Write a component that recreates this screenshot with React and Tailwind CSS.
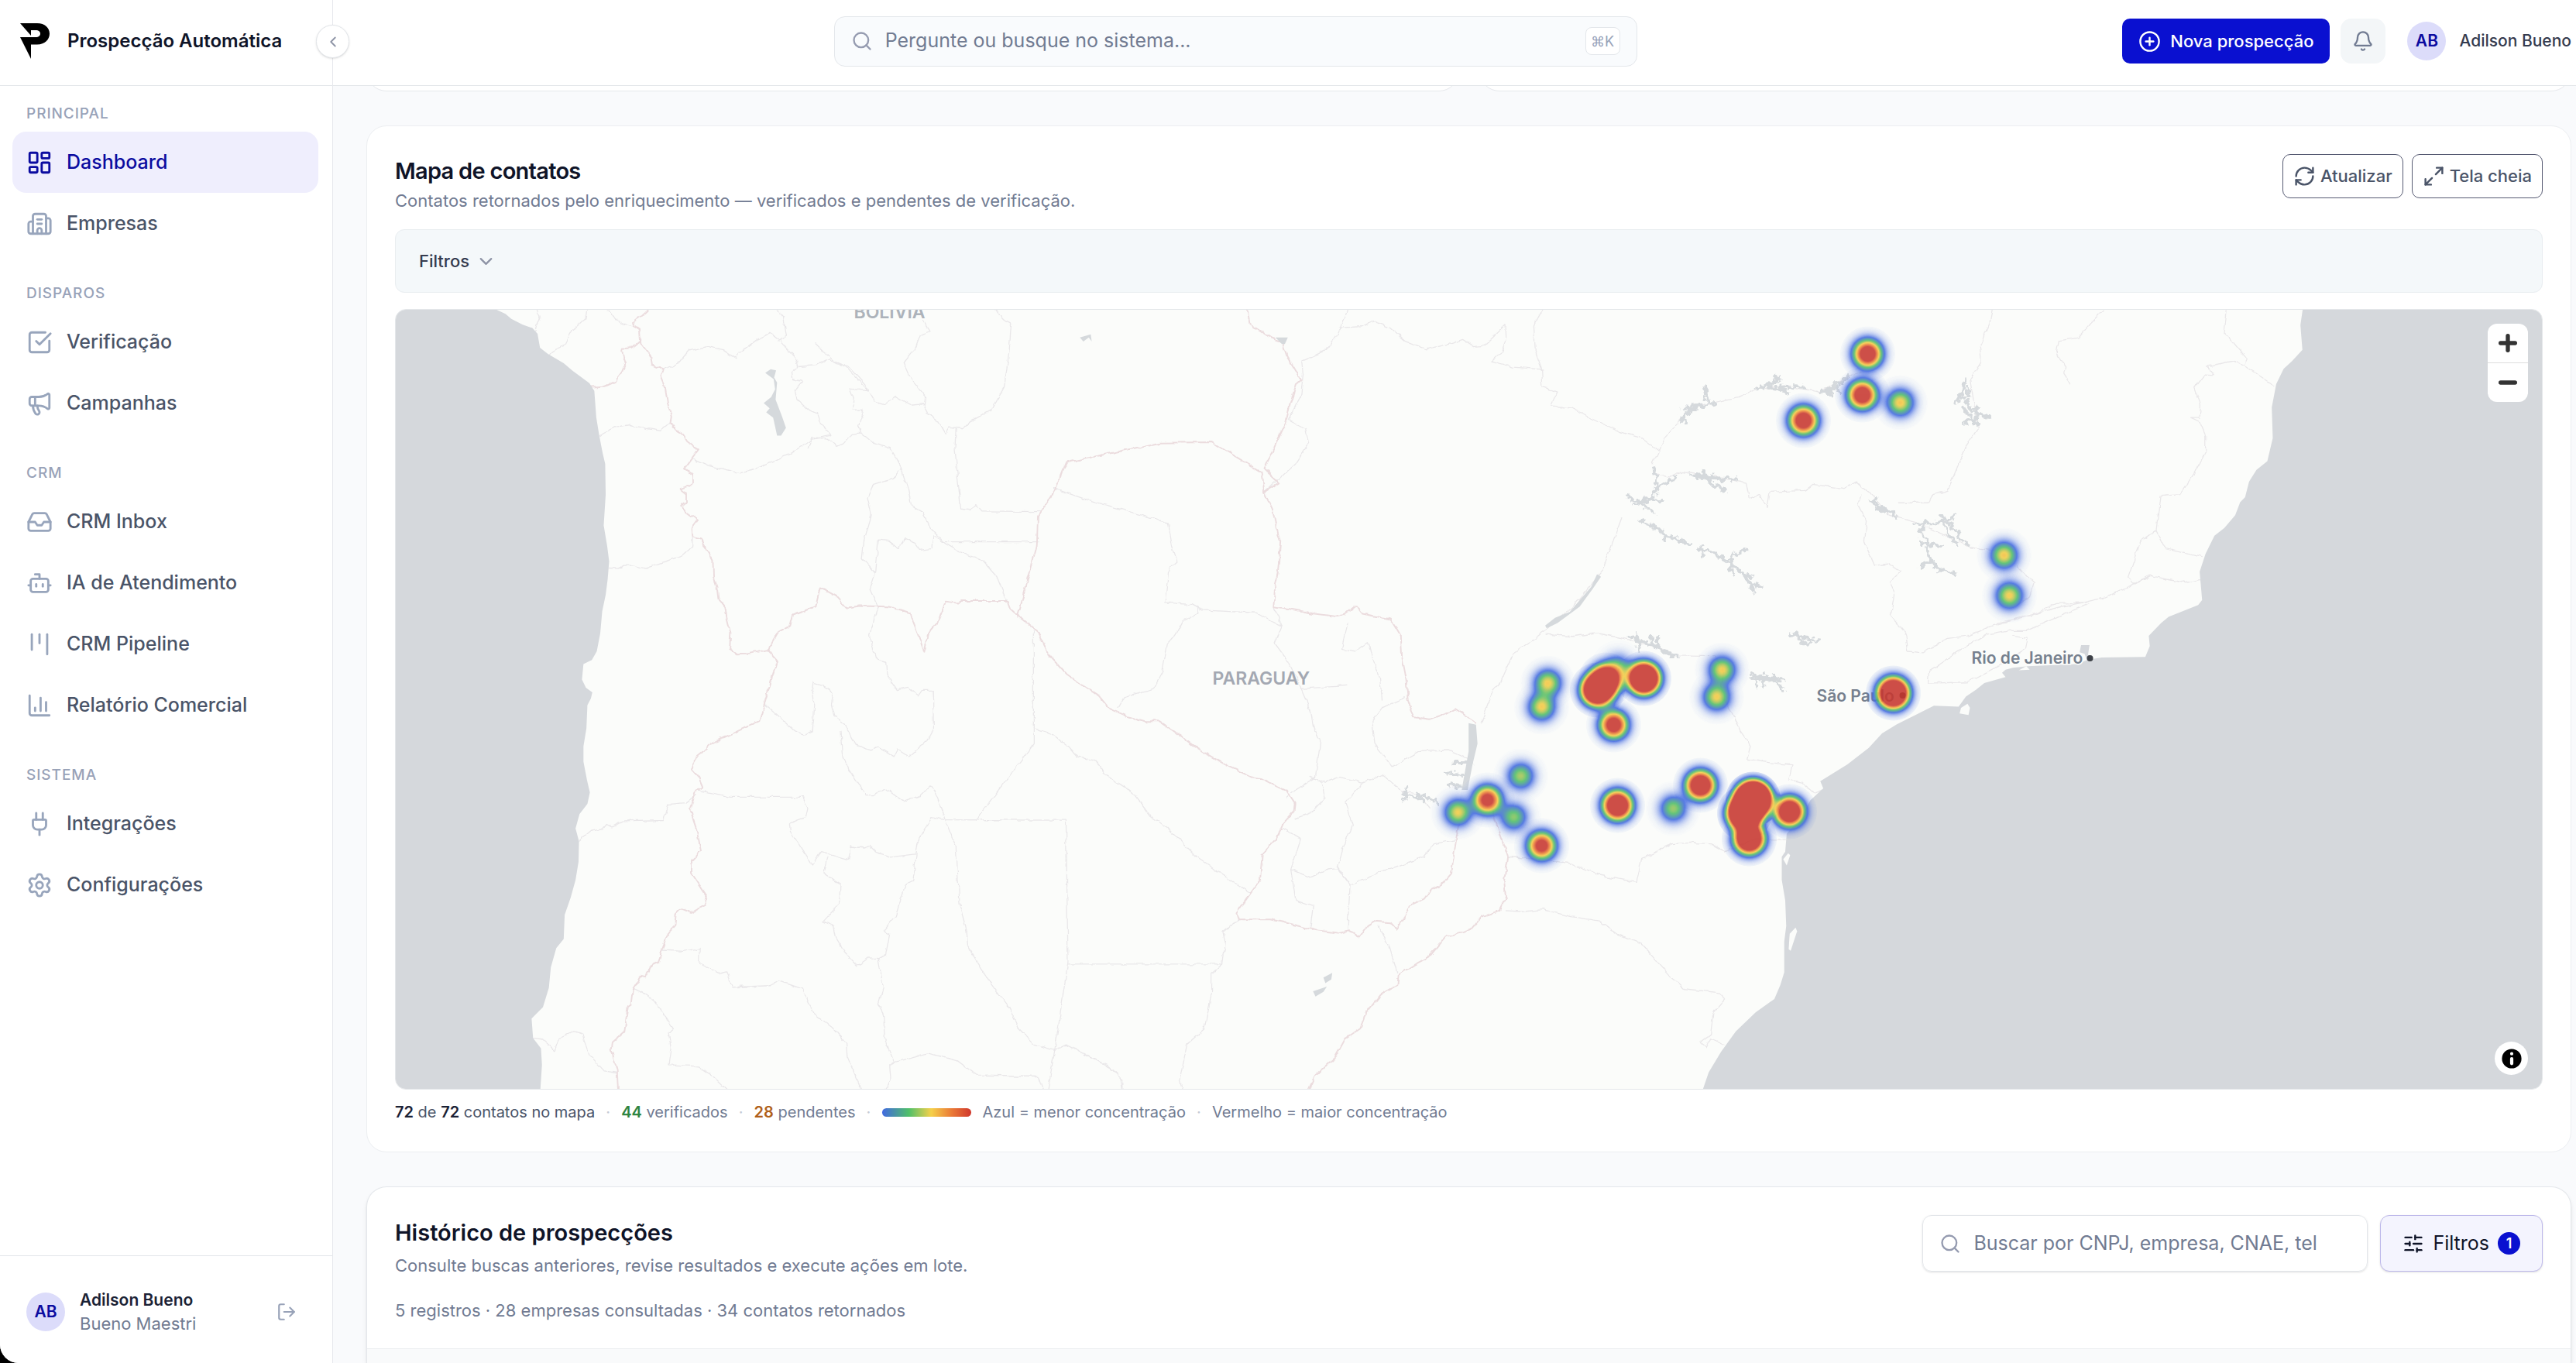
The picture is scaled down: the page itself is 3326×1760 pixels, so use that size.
import React, { useState } from 'react';
import {
  Bell,
  Bot,
  Building2,
  ChartColumn,
  ChevronDown,
  ChevronLeft,
  CirclePlus,
  Inbox,
  Kanban,
  LayoutDashboard,
  LogOut,
  Maximize2,
  Megaphone,
  Minus,
  Plug,
  Plus,
  RefreshCw,
  Search,
  Settings,
  SlidersHorizontal,
  SquareCheckBig,
} from 'lucide-react';

const NAV = [
  {
    title: 'Principal',
    items: [
      { label: 'Dashboard', icon: LayoutDashboard, active: true },
      { label: 'Empresas', icon: Building2 },
    ],
  },
  {
    title: 'Disparos',
    items: [
      { label: 'Verificação', icon: SquareCheckBig },
      { label: 'Campanhas', icon: Megaphone },
    ],
  },
  {
    title: 'CRM',
    items: [
      { label: 'CRM Inbox', icon: Inbox },
      { label: 'IA de Atendimento', icon: Bot },
      { label: 'CRM Pipeline', icon: Kanban },
      { label: 'Relatório Comercial', icon: ChartColumn },
    ],
  },
  {
    title: 'Sistema',
    items: [
      { label: 'Integrações', icon: Plug },
      { label: 'Configurações', icon: Settings },
    ],
  },
];

// x, y, weight
const CONTACTS = [
  [2412, 457, 1.45],
  [2405, 510, 1.45],
  [2454, 520, 0.63],
  [2329, 543, 1.45],
  [2588, 717, 0.63],
  [2595, 769, 0.61],
  [2445, 895, 3],
  [2311, 1048, 2],
  [1999, 882, 0.61],
  [1991, 913, 0.61],
  [2063, 891, 3.2],
  [2074, 878, 2.3],
  [2090, 862, 0.35],
  [2123, 876, 3.4],
  [2084, 936, 1.35],
  [2224, 865, 0.61],
  [2217, 900, 0.61],
  [1964, 1002, 0.5],
  [1921, 1033, 1.22],
  [1883, 1049, 0.6],
  [1955, 1055, 0.46],
  [1991, 1092, 1.22],
  [2089, 1040, 2],
  [2161, 1044, 0.48],
  [2196, 1014, 1.85],
  [2264, 1032, 8],
  [2253, 1050, 5],
  [2259, 1083, 2.5],
];

const KERNEL = 240;
const DENSITY = 1.2;
const RAMP = [
  [0, 65, 105, 225, 0],
  [0.2, 65, 105, 225, 1],
  [0.4, 80, 190, 105, 1],
  [0.6, 245, 205, 70, 1],
  [0.8, 235, 125, 55, 1],
  [1, 200, 55, 48, 1],
];

function rampAt(d) {
  if (d >= 1) return RAMP[RAMP.length - 1].slice(1);
  const i = RAMP.findIndex((stop) => stop[0] > d) - 1;
  const a = RAMP[i];
  const b = RAMP[i + 1];
  const t = (d - a[0]) / (b[0] - a[0]);
  return [1, 2, 3, 4].map((c) => a[c] + (b[c] - a[c]) * t);
}

// Alpha is stored as 1 - exp(-density), so stacked points add up.
const TABLE = Array.from({ length: 101 }, (_, i) => rampAt(-Math.log(1 - Math.min(i / 100, 0.99)) / DENSITY));
const channel = (c, max) => TABLE.map((v) => (v[c] / max).toFixed(3)).join(' ');

const WEIGHTS = [...new Set(CONTACTS.map((p) => p[2]))];

function Heatmap() {
  return (
    <g>
      <defs>
        {WEIGHTS.map((w) => (
          <radialGradient key={w} id={`heat-${Math.round(w * 100)}`}>
            {Array.from({ length: 37 }, (_, i) => {
              const d = w * Math.exp(-(i * i) / KERNEL);
              return <stop key={i} offset={i / 36} stopColor="#fff" stopOpacity={i === 36 ? 0 : 1 - Math.exp(-d * DENSITY)} />;
            })}
          </radialGradient>
        ))}
        <filter id="heat-ramp" filterUnits="userSpaceOnUse" x="1800" y="400" width="900" height="800" colorInterpolationFilters="sRGB">
          <feColorMatrix values="0 0 0 1 0  0 0 0 1 0  0 0 0 1 0  0 0 0 1 0" />
          <feComponentTransfer>
            <feFuncR type="table" tableValues={channel(0, 255)} />
            <feFuncG type="table" tableValues={channel(1, 255)} />
            <feFuncB type="table" tableValues={channel(2, 255)} />
            <feFuncA type="table" tableValues={channel(3, 1)} />
          </feComponentTransfer>
        </filter>
      </defs>
      <g filter="url(#heat-ramp)" opacity="0.88">
        {CONTACTS.map(([x, y, w]) => (
          <circle key={`${x}-${y}`} cx={x} cy={y} r="36" fill={`url(#heat-${Math.round(w * 100)})`} />
        ))}
      </g>
    </g>
  );
}

const OCEANS = [
  // Pacific
  'M0 20L222 30L240 38L252 48L275 59L295 66L305 77L310 104L326 116L358 134L376 149L410 173L420 188L424 240L430 275L437 310L442 330L443 390L439 450L446 490L450 520L447 555L443 585L436 617L432 660L425 695L415 712L398 720L395 750L403 766L416 775L413 787L406 800L404 845L398 880L398 910L405 945L411 970L406 992L390 1012L382 1040L389 1065L388 1105L382 1140L372 1175L360 1208L358 1255L343 1273L332 1310L328 1350L316 1388L293 1410L296 1448L312 1468L314 1500L310 1560L0 1560Z',
  // Atlantic
  'M3880 20L3874 60L3878 108L3857 130L3840 145L3825 175L3816 220L3818 280L3807 325L3785 342L3770 365L3762 395L3752 405L3742 430L3720 455L3700 470L3682 505L3670 540L3675 595L3667 605L3607 628L3592 640L3567 665L3569 685L3560 706L3472 707L3452 710L3444 702L3447 683L3430 683L3427 697L3437 700L3442 712L3422 720L3367 722L3322 724L3292 727L3277 731L3270 737L3277 745L3252 752L3234 757L3217 770L3197 783L3182 803L3162 802L3132 801L3097 818L3057 837L3027 855L3000 883L2957 915L2902 948L2908 962L2882 985L2862 1020L2834 1050L2831 1085L2824 1095L2824 1140L2831 1180L2833 1230L2829 1260L2829 1320L2821 1345L2809 1372L2771 1398L2731 1435L2701 1475L2676 1515L2660 1560L4400 1560L4400 20Z',
];

const ISLANDS = [
  'M2827 1100L2837 1088L2841 1092L2834 1112Z',
  'M2840 1245L2852 1233L2855 1240L2842 1278L2838 1275Z',
  'M3187 805L3200 797L3205 805L3202 819L3184 816Z',
  'M3304 732L3319 724L3326 731Z',
];

const COUNTRY_BORDERS = [
  'M531 28L515 42L498 55L500 62L512 70L514 95L534 120L537 137L560 147L555 160L563 178L568 210L576 240L574 250L585 264L600 273L608 285L631 302L615 322L603 338L620 352L620 368L615 374L593 380L606 390L606 403L597 413L604 423L628 440L618 455L619 472L637 480L660 518L661 550L668 570L671 593L685 608L688 630L696 660L694 690L708 700L735 699L771 692L790 712L754 831L655 875L637 893L625 902L617 925L631 940L640 960L625 966L614 1000L620 1022L627 1042L636 1083L617 1102L617 1127L648 1172L643 1188L614 1203L596 1196L585 1207L583 1230L570 1243L557 1275L550 1300L537 1306L523 1330L514 1328L498 1352L494 1382L488 1386L481 1436L457 1456L455 1470L466 1512L468 1550',
  'M413 180L442 179L463 170L478 150L484 136L476 112L478 106L495 104L514 88',
  'M771 692L790 660L815 647L821 625L868 608L877 572L895 580L910 588L931 610L960 607L1015 608L1060 620L1066 640L1075 662L1088 696L1097 660L1118 635L1131 598L1155 601L1162 597L1256 597L1262 612L1280 628L1317 657L1340 700L1375 738L1400 755L1440 780L1462 806L1500 822L1535 831L1564 831L1600 855L1641 885L1700 917L1755 942L1775 945L1822 967L1838 990L1836 1007L1815 1030L1800 1062L1772 1090L1768 1140L1742 1175L1720 1205L1724 1217L1790 1217L1838 1228L1880 1238L1926 1243L1948 1238L1970 1252L1985 1230L2000 1221L2032 1223L2044 1236L2060 1214L2070 1190L2100 1177L2113 1160L2135 1150L2155 1128L2162 1080L2170 1030',
  'M1277 628L1316 490L1318 432L1352 382L1374 328L1565 289L1670 288L1772 347L1776 385L1793 420L1801 455L1809 480L1804 540L1798 570L1795 608L1830 613L1880 622L1920 627L1940 622L1962 606L1975 622L2033 633L2053 665L2055 705L2063 745L2067 790L2080 825L2110 829L2142 818L2163 807L2204 833',
  'M1742 28L1747 58L1788 84L1812 92L1822 120L1838 145L1851 167L1842 175L1828 215L1820 250L1776 340L1806 367L1776 385',
  'M2238 1010L2252 1045L2270 1095L2262 1140L2265 1175L2252 1200L2215 1212L2195 1236L2145 1250L2110 1290L2080 1305L2048 1325L2046 1345L2012 1364L1982 1400L1970 1430L1940 1450L1920 1485L1880 1520L1866 1550',
];

const STATE_BORDERS = [
  'M305 30L310 45L300 70L285 78L295 66',
  'M405 30L402 48L372 75L360 98L340 106L329 118',
  'M448 30L460 46L478 57L500 62',
  'M430 274L465 258L490 254L530 262L555 266L574 250',
  'M450 533L468 534L480 528L500 528L523 534L597 509L618 490L619 472',
  'M560 147L590 136L612 110L650 102L680 108L708 126L712 115L750 88L775 76L790 85L830 128L833 141L820 152L822 165L842 170L826 188L830 203L855 225L872 232L880 255L899 275L862 282L820 308L760 335L715 348L650 333L618 319',
  'M790 30L803 45L809 80L793 92',
  'M833 141L870 138L895 126L912 135L935 140L968 175L988 208L1008 214L1030 200L1060 216L1085 214L1095 232L1112 243L1130 273L1140 258L1165 262L1178 250',
  'M868 96L905 130L930 140L975 188L937 184L945 203L942 225L965 225L955 255L960 270L985 290L1020 300L1040 335L1055 380L1062 412L1085 425L1100 455L1130 485L1160 502L1205 518L1235 550L1255 598',
  'M853 298L862 278L893 282L910 296L925 290L940 272L960 270',
  'M1085 50L1100 72L1080 80L1070 105L1047 133L1062 165L1090 198L1088 216',
  'M1233 30L1245 48L1264 57L1260 110L1250 180L1225 225L1178 250',
  'M1152 262L1150 300L1162 418L1180 420L1194 411L1203 422L1322 423',
  'M1042 338L1025 358L985 370L973 395L981 430L966 480L962 515L988 542',
  'M1318 482L1125 482L1106 470L1103 495L1080 498L1070 485L1048 476L1037 494L1015 480L995 478L990 540L978 575L994 608L983 645L977 665L990 710L1010 715L1012 740L1033 770L1055 765L1077 782L1085 771L1105 771L1107 848L1098 865L1057 900L1033 885L1025 900L995 882L980 888L950 878L925 835L905 820L900 800L904 775L882 762L863 757L860 775L866 800L862 850L845 857L825 850L800 828L764 798',
  'M918 852L922 895L935 925L970 975L985 975L1010 962L1045 987L1080 975L1100 957L1115 980L1130 1023L1375 1024L1379 1300L1352 1472L1338 1550',
  'M1309 655L1309 875L1192 1024',
  'M1309 845L1345 855L1380 880L1398 900L1438 910L1450 932L1510 970L1545 1015L1575 1035L1640 1095L1700 1135L1748 1165',
  'M630 965L695 979L842 979L852 1000L848 1018L815 1030L817 1045L860 1110L880 1085L935 1100L940 1075L965 1078L978 1074L990 1086L1020 1096L1070 1090L1073 1070L1103 1017L1130 1023L1152 1075L1160 1190L1174 1240L1176 1270L1225 1345L1260 1390L1280 1430L1310 1460L1352 1472L1375 1461L1410 1478L1470 1510L1490 1530L1490 1550',
  'M893 1095L885 1128L918 1148L916 1185L882 1221L905 1230L910 1255L925 1280L952 1308L975 1292L995 1293L1010 1285L1018 1245L1006 1240L1030 1210L1050 1150L1065 1143L1072 1090',
  'M995 1293L1005 1350L995 1382L1005 1400L1008 1450L1027 1495L1098 1478L1155 1492L1194 1520L1318 1522L1328 1550',
  'M1027 1495L1018 1500L1020 1530L1006 1550',
  'M390 1063L415 1043L438 1040L445 1032L455 1037L480 1025L560 1023L570 993L605 990L625 975',
  'M557 1277L600 1279L633 1273L632 1303L675 1322L687 1319L700 1349L775 1346L795 1337L840 1352L865 1400L905 1430L930 1460L932 1485L960 1550',
  'M498 1352L520 1360L540 1375L580 1430L570 1437L575 1467L570 1500L630 1503L660 1522L690 1550',
  'M296 1448L315 1450L340 1472L348 1450L380 1435L395 1440L410 1480L440 1512L466 1516',
  'M1350 378L1411 398L1582 445L1590 490L1600 520L1583 535L1575 600L1630 604L1650 615L1760 620L1812 645',
  'M1642 608L1642 620L1612 635L1600 658L1580 680L1570 735L1550 770L1493 785L1481 805',
  'M1379 1304L1692 1304L1670 1322L1670 1360L1655 1430L1620 1460L1605 1530L1610 1550',
  'M1692 1304L1698 1260L1694 1240L1724 1217',
  'M1411 1480L1460 1502L1485 1525L1490 1550',
  'M1945 28L1932 65L1900 110L1852 130L1855 155L1850 200L1825 245L1860 262L1866 290L1840 330L1776 385',
  'M1930 65L1975 63L1998 52L2030 65L2060 90L2105 107L2150 97L2178 88L2200 102L2222 100L2265 60L2266 85L2255 115L2235 130L2280 142L2340 146',
  'M2340 30L2322 60L2325 110L2338 145L2340 180L2370 190L2357 217L2400 222L2440 242L2495 268L2540 280L2575 305L2563 330',
  'M2575 305L2590 275L2640 220L2690 210L2735 200L2780 182L2840 180L2900 190L2960 160L2990 150',
  'M2563 350L2600 356L2622 346L2700 357L2752 368L2758 398L2778 390L2795 415L2800 385L2870 382L2885 370L2950 378L2975 365L3000 385L3040 430L3100 445L3200 490L3255 500',
  'M2500 435L2475 500L2460 540L2400 610L2345 655L2280 700L2255 755L2240 770L2215 835',
  'M2345 662L2400 666L2450 660L2520 673L2580 690L2610 704L2690 705L2705 730L2700 780L2725 815L2740 850L2762 880L2755 905L2800 912L2845 916L2838 945L2865 950L2890 972L2905 965',
  'M1795 610L1812 645L1798 680L1825 715L1850 765L1870 810L1875 840L1890 870L1880 940L1840 965L1822 980',
  'M1850 768L1945 762M1945 640L1935 690L1960 695L1985 678L2000 720L2010 745L2015 790M2060 785L2015 805L1995 830L2000 875L2035 920L2090 890L2150 888L2190 905',
  'M1870 940L1900 950L1930 940L1975 950L2015 935L2060 970L2090 975L2110 1000',
  'M1890 945L1900 980L1870 1010L1840 1020M1975 952L1940 990L1955 1035L1935 1080L1925 1115L1950 1150L1945 1235M1815 1040L1850 1060L1830 1120L1840 1180L1875 1192L1870 1232M1830 1120L1870 1135L1905 1120L1925 1118L1950 1150L2010 1125L2100 1095L2120 1070L2165 1062M2008 1230L2030 1270L2045 1320',
  'M2270 1095L2330 1100L2400 1110L2450 1130L2530 1145L2540 1100L2600 1070L2640 1068L2680 1070L2710 1085L2770 1060L2834 1062',
  'M2265 1200L2300 1202L2340 1198L2400 1212L2455 1220L2490 1245L2540 1265L2600 1330L2625 1352L2700 1360L2708 1375L2685 1400L2680 1440L2660 1455L2672 1465L2680 1450L2708 1462',
  'M3250 30L3245 55L3225 100L3228 130L3205 165L3222 262L3195 300L3160 382L3130 390L3122 406L3062 406',
  'M3474 32L3450 55L3425 85L3385 90L3380 115L3398 140L3395 155L3408 175',
  'M3725 30L3720 75L3735 90L3765 125L3760 138L3822 178',
  'M3760 138L3738 130L3685 140L3700 158L3680 157L3660 182L3672 215L3670 240L3652 240L3670 248L3682 275L3682 308L3658 350L3630 390L3590 393L3582 460L3550 482L3525 552L3535 563L3570 548',
  'M3582 460L3600 495L3675 512M3675 555L3640 562L3570 548L3480 590L3435 600L3390 608L3250 645L3200 665L3160 670L3110 698L3080 695L3075 660L3045 625L3052 580L3042 560L3065 540L3040 525L3012 528L2990 480L2995 440L2978 410L2985 390',
  'M3444 603L3390 625L3320 655L3280 655L3240 662L3190 690L3122 735L3120 757L3200 755L3260 725L3318 690L3322 670L3290 665',
  'M3440 600L3380 602L3330 625L3260 640M3300 530L3335 560L3325 590L3300 605',
];

const LAKES = [
  'M766 153L777 146L788 148L784 162L790 172L787 205L800 238L808 260L798 275L790 275L782 240L768 230L775 222L763 212L778 200L786 185L783 165Z',
  'M1403 84L1425 78L1427 92L1421 84L1410 92Z',
  'M1799 84L1824 84L1818 97L1812 97Z',
  'M1875 1357L1903 1348L1896 1358L1880 1367ZM1896 1330L1914 1321L1912 1334L1900 1341Z',
  'M2190 835L2205 838L2208 875L2198 915L2188 965L2176 965L2190 890Z',
  'M2345 645L2365 630L2395 618L2420 590L2438 570L2450 545L2458 550L2440 575L2415 608L2370 640L2348 650Z',
];

const RESERVOIRS = [
  'M2538 440L2570 455L2590 470L2610 475L2640 487M2572 452L2588 468L2586 478',
  'M2655 495L2690 505L2720 525L2740 540L2765 565L2785 570M2662 490L2665 512M2715 520L2732 503L2755 498M2720 525L2723 545M2740 540L2768 578M2752 548L2765 550',
  'M2525 410L2555 400L2570 385L2572 365L2565 335M2510 393L2535 405L2568 425M2550 400L2582 403M2570 378L2610 357',
  'M2618 250L2630 232L2650 220L2690 212M2668 180L2675 212M2625 222L2645 225M2620 238L2632 250M2640 218L2675 216',
  'M2775 185L2800 175L2820 160M2795 178L2835 190M2818 180L2870 182M2805 155L2820 168',
  'M2640 352L2672 352L2700 358L2735 360M2665 345L2680 370L2712 380M2650 356L2700 360',
  'M2900 195L2920 185L2945 170L2958 160M2905 185L2925 195M2930 172L2940 190M2915 190L2950 168',
  'M2518 668L2545 678L2570 685L2585 695L2615 704M2530 662L2535 692M2560 668L2562 682L2600 705M2572 665L2575 690M2530 674L2575 688',
  'M2762 738L2790 748L2830 750M2770 745L2775 765M2790 742L2785 765M2808 740L2812 755L2825 770M2765 748L2800 752',
  'M2842 660L2870 670L2902 673M2852 658L2862 678L2885 680',
  'M3195 168L3190 190L3175 212M3200 180L3205 200L3190 200M3198 208L3208 228L3245 240M3190 220L3215 250M3190 250L3215 245M3210 225L3220 218L3218 255',
  'M3002 402L3025 415L3058 435M3012 400L3020 420L3050 425M3092 445L3165 445L3190 480L3205 490M3148 430L3160 465L3180 490M3160 440L3175 432M3100 460L3120 480L3118 500L3128 520L3105 530M3105 485L3148 490M3120 510L3140 535L3175 543M3112 450L3104 468',
  'M2142 932L2185 935M2150 955L2180 958M2160 912L2195 912M2055 970L2080 980L2100 975L2125 990M2065 962L2062 985M2085 975L2100 988',
];

function ContactMap() {
  return (
    <svg
      viewBox="511 400 2772 1006"
      preserveAspectRatio="xMidYMid slice"
      className="block h-full w-full font-['Inter',sans-serif] font-semibold"
      role="img"
      aria-label="Mapa de calor dos contatos"
    >
      <defs>
        <filter id="jagged-lines" filterUnits="userSpaceOnUse" x="0" y="0" width="4400" height="1600" colorInterpolationFilters="sRGB">
          <feTurbulence type="fractalNoise" baseFrequency="0.06" numOctaves="2" seed="4" />
          <feDisplacementMap in="SourceGraphic" scale="9" xChannelSelector="R" yChannelSelector="G" />
        </filter>
        <filter id="jagged-water" filterUnits="userSpaceOnUse" x="0" y="0" width="4400" height="1600" colorInterpolationFilters="sRGB">
          <feTurbulence type="fractalNoise" baseFrequency="0.1" numOctaves="2" seed="8" />
          <feDisplacementMap in="SourceGraphic" scale="18" xChannelSelector="R" yChannelSelector="G" />
        </filter>
      </defs>
      <rect x="511" y="400" width="2772" height="1006" fill="#fbfcfa" />
      <g transform="translate(500 380) scale(0.63776 0.66327)" fill="none" strokeLinejoin="round" strokeLinecap="round">
        <g filter="url(#jagged-lines)">
          {STATE_BORDERS.map((d) => (
            <path key={d} d={d} stroke="#e9e7e9" strokeWidth="2" />
          ))}
          {COUNTRY_BORDERS.map((d) => (
            <path key={d} d={d} stroke="#ebdcde" strokeWidth="3" />
          ))}
        </g>
        {LAKES.map((d) => (
          <path key={d} d={d} fill="#d5d9dc" />
        ))}
        <g filter="url(#jagged-water)">
          {RESERVOIRS.map((d) => (
            <path key={d} d={d} stroke="#d5d9dc" strokeWidth="6" />
          ))}
        </g>
        {OCEANS.map((d) => (
          <path key={d} d={d} fill="#d5d8dc" />
        ))}
        {ISLANDS.map((d) => (
          <path key={d} d={d} fill="#fbfcfa" />
        ))}
      </g>
      <g fontSize="23">
        <text x="1103" y="411" fill="#adb3ba">BOLIVIA</text>
        <text x="1566" y="884" fill="#a3a8b2">PARAGUAY</text>
      </g>
      <g fontSize="21">
        <g fill="#76808e" stroke="#fbfcfa" strokeWidth="3" paintOrder="stroke">
          <text x="2546" y="857">Rio de Janeiro</text>
          <text x="2346" y="906">São Paulo</text>
        </g>
        <circle cx="2699" cy="850" r="4" fill="#3d4147" />
        <circle cx="2457" cy="898" r="4" fill="#3d4147" />
      </g>
      <Heatmap />
    </svg>
  );
}

function Logo() {
  return (
    <svg viewBox="0 0 38 46" className="h-[46px] w-[38px] shrink-0" aria-hidden="true">
      <path
        fill="#000"
        fillRule="evenodd"
        d="M0 0H22C32 0 38 6 38 13.500C38 21 32 27.500 22 27.500H14V46L0 18H20C24 18 26 16 26 13.500C26 11 24 9 20 9H14V16Z"
      />
    </svg>
  );
}

function Avatar() {
  return (
    <span className="flex size-[50px] shrink-0 items-center justify-center rounded-full bg-[#dcdcfa] text-[21px] font-semibold text-[#0b0ba0]">
      AB
    </span>
  );
}

function Sidebar() {
  return (
    <aside className="flex w-[430px] shrink-0 flex-col border-r border-[#e6e8ec] bg-white">
      <div className="relative flex h-[111px] shrink-0 items-center gap-[23px] border-b border-[#e2e5e9] pb-1 pl-[26px]">
        <Logo />
        <span className="text-[24px] font-semibold text-[#0f1428]">Prospecção Automática</span>
        <button
          type="button"
          aria-label="Recolher menu"
          className="absolute top-8 -right-[22px] z-10 flex size-[43px] items-center justify-center rounded-full border border-[#e2e5e9] bg-white text-[#8d93a5] shadow-sm"
        >
          <ChevronLeft size={22} />
        </button>
      </div>
      <nav className="flex flex-1 flex-col gap-9 pt-[21px] pr-[18px] pl-4">
        {NAV.map((group) => (
          <div key={group.title}>
            <h2 className="mb-2 pl-[18px] text-[19px] leading-[30px] font-medium tracking-wider text-[#98a2b8] uppercase">
              {group.title}
            </h2>
            <ul>
              {group.items.map(({ label, icon: Icon, active }) => (
                <li key={label}>
                  <a
                    href="#"
                    aria-current={active ? 'page' : undefined}
                    className={
                      active
                        ? 'flex h-[79px] items-center gap-[18px] rounded-[18px] bg-[#efeefd] pl-[18px] text-[25px] font-medium text-[#0b0ba0]'
                        : 'flex h-[79px] items-center gap-[18px] rounded-[18px] pl-[18px] text-[25px] font-medium text-[#4a5468]'
                    }
                  >
                    <Icon size={34} className={active ? 'text-[#0b0ba0]' : 'text-[#98a5bc]'} />
                    {label}
                  </a>
                </li>
              ))}
            </ul>
          </div>
        ))}
      </nav>
      <div className="flex items-center gap-[19px] border-t border-[#e2e5e9] pt-[42px] pr-[46px] pb-9 pl-[34px]">
        <Avatar />
        <div className="flex-1 leading-[30px]">
          <p className="text-[21px] font-semibold text-[#1b2235]">Adilson Bueno</p>
          <p className="text-[22px] text-[#717b92]">Bueno Maestri</p>
        </div>
        <button type="button" aria-label="Sair" className="text-[#98a2b8]">
          <LogOut size={26} />
        </button>
      </div>
    </aside>
  );
}

function Topbar() {
  return (
    <header className="flex h-[111px] shrink-0 items-center border-b border-[#e2e5e9] bg-white pr-[6px] pb-1 pl-5">
      <div className="flex-1" />
      <div className="flex h-[65px] shrink basis-[1037px] items-center gap-4 rounded-[14px] border border-[#e4e7eb] bg-[#f9fbfd] px-[21px]">
        <Search size={28} className="text-[#959bb0]" />
        <input
          type="text"
          aria-label="Busca no sistema"
          placeholder="Pergunte ou busque no sistema..."
          className="min-w-0 flex-1 bg-transparent text-[25px] outline-none placeholder:text-[#717b92]"
        />
        <kbd className="flex h-9 w-[45px] items-center justify-center rounded-lg border border-[#e4e7eb] bg-white font-['Inter','DejaVu_Sans',sans-serif] text-[18px] text-[#98a2b8]">
          ⌘K
        </kbd>
      </div>
      <div className="flex-1" />
      <button type="button" className="flex h-[58px] items-center gap-3 rounded-[10px] bg-[#0a10d0] px-[21px] text-[22px] font-medium text-white">
        <CirclePlus size={29} />
        Nova prospecção
      </button>
      <button type="button" aria-label="Notificações" className="ml-[14px] flex size-[58px] items-center justify-center rounded-[14px] bg-[#f3f6f8] text-[#717b92]">
        <Bell size={28} />
      </button>
      <div className="ml-7 flex items-center gap-[17px] text-[21px] font-medium text-[#353b4e]">
        <Avatar />
        Adilson Bueno
      </div>
    </header>
  );
}

function Dot() {
  return <span className="w-[34px] text-center text-[#c5cad4]">·</span>;
}

function MapCard({ onToggleFilters, filtersOpen }) {
  return (
    <section className="rounded-[26px] border border-[#eceef1] bg-white p-9">
      <div className="flex items-start justify-between">
        <div>
          <h2 className="pt-0.5 text-[29px] leading-10 font-semibold tracking-tight text-[#0f1428]">Mapa de contatos</h2>
          <p className="text-[22px] leading-9 text-[#717b92]">
            Contatos retornados pelo enriquecimento — verificados e pendentes de verificação.
          </p>
        </div>
        <div className="flex gap-[11px] text-[22px] font-medium text-[#4a5468]">
          <button type="button" className="flex h-[57px] items-center gap-[6px] rounded-[10px] border border-[#565a72] px-[13px]">
            <RefreshCw size={29} />
            Atualizar
          </button>
          <button type="button" className="flex h-[57px] items-center gap-[6px] rounded-[10px] border border-[#565a72] px-[13px]">
            <Maximize2 size={29} />
            Tela cheia
          </button>
        </div>
      </div>
      <div className="mt-[19px] flex h-[82px] items-center rounded-xl border border-[#e9edf0] bg-[#f4f8fa] pl-[30px]">
        <button
          type="button"
          aria-expanded={filtersOpen}
          onClick={onToggleFilters}
          className="flex items-center gap-2 text-[22px] font-medium text-[#353b4e]"
        >
          Filtros
          <ChevronDown size={27} className="text-[#8d93a5]" />
        </button>
      </div>
      <div className="relative mt-[21px] h-[1008px] overflow-hidden rounded-[14px] border border-[#e4e7ea]">
        <ContactMap />
        <div className="absolute top-[18px] right-[18px] flex w-[52px] flex-col overflow-hidden rounded-xl bg-white text-[#333]">
          <button type="button" aria-label="Aproximar" className="flex h-[51px] items-center justify-center border-b border-[#ddd]">
            <Plus size={32} strokeWidth={4} />
          </button>
          <button type="button" aria-label="Afastar" className="flex h-[50px] items-center justify-center">
            <Minus size={32} strokeWidth={4} />
          </button>
        </div>
        <button
          type="button"
          aria-label="Créditos do mapa"
          className="absolute right-[18px] bottom-[18px] flex size-[43px] items-center justify-center rounded-full bg-white"
        >
          <svg viewBox="0 0 20 20" className="size-[42px]" aria-hidden="true">
            <path
              fillRule="evenodd"
              d="M4 10a6 6 0 1 0 12 0 6 6 0 1 0-12 0m5-3a1 1 0 1 0 2 0 1 1 0 1 0-2 0m0 3a1 1 0 1 1 2 0v3a1 1 0 1 1-2 0"
            />
          </svg>
        </button>
      </div>
      <div className="mt-[14px] flex items-center text-[20px] leading-[30px] text-[#717b92]">
        <span className="text-[#4a5468]">
          <b className="font-semibold text-[#1b2235]">72</b> de <b className="font-semibold text-[#1b2235]">72</b> contatos no mapa
        </span>
        <Dot />
        <span>
          <b className="font-semibold text-[#2f8542]">44</b> verificados
        </span>
        <Dot />
        <span>
          <b className="font-semibold text-[#b0601a]">28</b> pendentes
        </span>
        <Dot />
        <span className="mr-[15px] h-[11px] w-[115px] rounded-full bg-[linear-gradient(90deg,#4169e1,#50c069_30%,#f5d04a_55%,#ea7a36_78%,#cf372c)]" />
        <span>Azul = menor concentração</span>
        <Dot />
        <span>Vermelho = maior concentração</span>
      </div>
    </section>
  );
}

function HistoryCard() {
  return (
    <section className="flex flex-1 flex-col overflow-hidden rounded-t-[26px] border border-b-0 border-[#e4e7eb] bg-white shadow-md">
      <div className="flex items-start justify-between px-9 pt-9">
        <div>
          <h2 className="text-[29px] leading-[46px] font-semibold text-[#0f1428]">Histórico de prospecções</h2>
          <p className="text-[22px] leading-[38px] text-[#717b92]">
            Consulte buscas anteriores, revise resultados e execute ações em lote.
          </p>
        </div>
        <div className="flex gap-4 text-[25px]">
          <div className="flex h-[73px] w-[575px] items-center gap-4 rounded-xl border border-[#e2e5e9] pr-12 pl-[21px] shadow-sm">
            <Search size={28} className="shrink-0 text-[#959bb0]" />
            <input
              type="text"
              aria-label="Buscar no histórico"
              placeholder="Buscar por CNPJ, empresa, CNAE, tel"
              className="min-w-0 flex-1 bg-transparent outline-none placeholder:text-[#717b92]"
            />
          </div>
          <button type="button" className="flex h-[73px] items-center gap-[11px] rounded-xl border border-[#bdb8ea] bg-[#f4f4fe] px-[28px] text-[#0f1428] shadow-sm">
            <SlidersHorizontal size={28} />
            Filtros
            <span className="flex size-[29px] items-center justify-center rounded-full bg-[#0a10d0] text-[18px] font-semibold text-white">1</span>
          </button>
        </div>
      </div>
      <p className="px-9 pt-6 pb-[34px] text-[22px] leading-[30px] text-[#717b92]">
        5 registros · 28 empresas consultadas · 34 contatos retornados
      </p>
      <div className="flex-1 border-t border-[#eceef1] bg-[#f9fafb]" />
    </section>
  );
}

export default function App() {
  const [filtersOpen, setFiltersOpen] = useState(false);

  return (
    <div className="bg-black">
      <div className="flex h-screen overflow-hidden rounded-bl-[24px] bg-white font-['Inter',sans-serif]">
        <Sidebar />
        <div className="flex min-w-0 flex-1 flex-col">
          <Topbar />
          <main className="flex flex-1 flex-col gap-11 bg-[#f9fafc] pr-[6px] pl-[43px]">
            <div className="flex h-[7px] shrink-0 items-end gap-[26px] overflow-hidden">
              <div className="h-16 flex-1 rounded-[26px] border border-[#e6e8ec] bg-white" />
              <div className="h-16 flex-1 rounded-[26px] border border-[#e6e8ec] bg-white" />
            </div>
            <MapCard filtersOpen={filtersOpen} onToggleFilters={() => setFiltersOpen(!filtersOpen)} />
            <HistoryCard />
          </main>
        </div>
      </div>
    </div>
  );
}
